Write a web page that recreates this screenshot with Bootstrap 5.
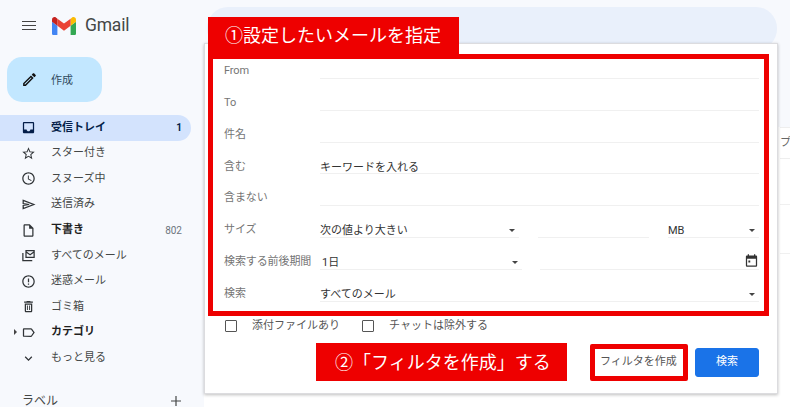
<!DOCTYPE html>
<html lang="ja">
<head>
    <meta charset="UTF-8">
    <meta name="viewport" content="width=device-width, initial-scale=1.0">
    <title>Gmail</title>
    <link href="https://cdn.jsdelivr.net/npm/bootstrap@5.3.0/dist/css/bootstrap.min.css" rel="stylesheet">
    <style>
        html, body {
            height: 407px;
            overflow: hidden;
        }
        body {
            background-color: #f7f9fd;
            font-family: Roboto, "Noto Sans CJK JP", sans-serif;
            font-size: 11px;
            color: #444746;
        }
        svg { display: block; flex-shrink: 0; }
        .gm-shell { height: 407px; width: 790px; overflow: hidden; }
        .gm-side { width: 204px; flex-shrink: 0; height: 407px; overflow: hidden; }
        .gm-top { height: 57px; padding: 0 0 6px 22px; }
        .gm-burger { width: 14px; margin-right: 16px; }
        .gm-burger i { display: block; height: 1.5px; background: #444; margin: 2.5px 0; }
        .gm-word { font-size: 17.5px; color: #444746; margin-left: 9px; letter-spacing: -.2px; }
        .gm-compose {
            width: 95px; height: 45px; margin-left: 7px; padding: 0 0 0 14px; gap: 13px;
            background: #c2e7ff; border-radius: 15px; color: #2f4a5e; margin-bottom: 13px;
        }
        .gm-compose span { padding-top: 3px; }
        .gm-nav { height: 25.6px; padding: 0 9px 0 21px; width: 191px; border-radius: 0 13px 13px 0; }
        .gm-nav svg { width: 15px; height: 15px; fill: #303437; margin-right: 15px; }
        .gm-nav.gm-on { background: #d3e3fd; color: #041e49; font-weight: 700; }
        .gm-nav.gm-on svg { fill: #041e49; }
        .gm-nav.gm-bold { color: #1f1f1f; font-weight: 700; }
        .gm-nav svg.gm-send { fill: none; stroke: #303437; stroke-width: 2; }
        .gm-count { margin-left: auto; font-size: 10px; }
        .gm-caret { position: absolute; left: 14px; top: 9px; border-left: 3px solid #444; border-top: 3px solid transparent; border-bottom: 3px solid transparent; }
        .gm-labels { margin-top: 24px; padding: 0 9px 0 22px; font-size: 12px; line-height: 12px; width: 191px; }
        .gm-main { flex-grow: 1; min-width: 0; padding-top: 7px; }
        .gm-search { width: 570px; height: 43px; margin-left: 3px; background: #e9f0fb; border-radius: 21px; }
        .gm-list { background: #fff; height: 357px; margin-top: 0; color: #666; }
        .gm-tab { margin-top: 77px; margin-left: 576px; height: 32px; padding-top: 7px; border-top: 1px solid #eee; border-bottom: 1px solid #eee; font-size: 11px; white-space: nowrap; }
        .gm-listline { margin-top: 45px; height: 50px; border-top: 1px solid #f0f0f0; border-bottom: 1px solid #f0f0f0; margin-left: 576px; }
        .gm-dialog {
            position: absolute; left: 204px; top: 43px; width: 574px; height: 351px;
            padding: 3px 18px 0 19px; background: #fff; border: 1px solid #dcdcdf; box-shadow: 0 1px 3px rgba(0,0,0,.25);
        }
        .gm-row { height: 31.85px; }
        .gm-name { width: 96px; color: #757575; padding-top: 16px; line-height: 16px; flex-shrink: 0; white-space: nowrap; letter-spacing: -.1px; }
        .gm-val { height: 100%; padding-top: 17px; line-height: 16px; border-bottom: 1px solid #f0f0f0; color: #333; }
        .gm-arrow::after {
            content: ""; position: absolute; right: 4px; top: 23px;
            border-top: 3px solid #444; border-left: 3px solid transparent; border-right: 3px solid transparent;
        }
        .gm-w-a { width: 199px; } .gm-w-b { width: 111px; margin-left: 19px; } .gm-w-c { width: 91px; margin-left: 19px; }
        .gm-w-d { width: 202px; padding-left: 2px; } .gm-w-e { width: 219px; margin-left: 18px; }
        .gm-cal { margin-top: -2px; }
        .gm-checks { margin-top: 16px; padding-left: 1px; color: #555; height: 16px; }
        .gm-checks .form-check-input {
            width: 12px; height: 12px; margin: 0 15px 0 0; border: 1.5px solid #555; border-radius: 1px; float: none;
        }
        .gm-gap { margin-right: 22px; }
        .gm-actions { position: absolute; right: 18px; top: 304px; height: 29px; }
        .gm-plain { font-size: 11px; color: #555; padding: 0 0 0 1px; width: 86px; height: 29px; margin-right: 10px; background: #fff; border: 0; }
        .gm-go { font-size: 11px; width: 64px; height: 29px; padding: 0; background: #1a73e8; border-color: #1a73e8; border-radius: 3px; }
        .gm-note { position: absolute; background: #ee0000; color: #fff; line-height: 1; white-space: nowrap; font-size: 18px; }
        .gm-note-a { left: 208px; top: 17px; width: 251px; height: 37px; padding: 10px 0 0 17px; }
        .gm-note-b { left: 316px; top: 343px; width: 251px; height: 38px; padding: 11px 0 0 19px; }
        .gm-frame { position: absolute; border: 5px solid #ee0000; pointer-events: none; }
        .gm-frame-a { left: 208px; top: 54px; width: 561px; height: 262px; }
        .gm-frame-b { left: 590px; top: 344px; width: 98px; height: 37px; border-radius: 2px; }
    </style>
</head>
<body>

    <div class="gm-shell d-flex">
        <aside class="gm-side">
            <div class="gm-top d-flex align-items-center">
                <div class="gm-burger"><i></i><i></i><i></i></div>
                <svg width="24" height="18" viewBox="0 0 24 18">
                    <path d="M1.6 18h3.8V8.8L0 4.700V16.400C0 17.300.7 18 1.600 18z" fill="#4285f4"/>
                    <path d="M18.600 18h3.800c.9 0 1.600-.7 1.600-1.600V4.700l-5.400 4.100z" fill="#34a853"/>
                    <path d="M18.600 1.700v7.100L24 4.700V2.500c0-2-2.300-3.200-3.900-2z" fill="#fbbc04"/>
                    <path d="M5.400 8.800V1.700L12 6.600l6.600-4.900v7.100L12 13.700z" fill="#ea4335"/>
                    <path d="M0 2.500v2.200l5.400 4.100V1.700L3.900.5C2.300-.7 0 .5 0 2.500z" fill="#c5221f"/>
                </svg>
                <span class="gm-word">Gmail</span>
            </div>
            <div class="gm-compose d-flex align-items-center">
                <svg width="17" height="17" viewBox="0 0 24 24" fill="#111"><path d="M14.060 9.020l.92.92L5.920 19H5v-.92l9.060-9.060M17.660 3c-.25 0-.51.1-.7.29l-1.830 1.830 3.750 3.750 1.830-1.830c.39-.39.39-1.020 0-1.410l-2.340-2.340c-.2-.2-.45-.29-.71-.29zm-3.600 3.190L3 17.250V21h3.750L17.810 9.940l-3.750-3.750z"/></svg>
                <span>作成</span>
            </div>
            <div class="gm-nav gm-on d-flex align-items-center">
                <svg viewBox="0 0 24 24"><path d="M19 3H5c-1.100 0-2 .9-2 2v14c0 1.100.9 2 2 2h14c1.100 0 2-.9 2-2V5c0-1.100-.9-2-2-2zm0 12h-4c0 1.660-1.340 3-3 3s-3-1.340-3-3H5V5h14v10z"/></svg>
                <span>受信トレイ</span><span class="gm-count">1</span>
            </div>
            <div class="gm-nav d-flex align-items-center">
                <svg viewBox="0 0 24 24"><path d="M22 9.240l-7.190-.62L12 2 9.190 8.630 2 9.240l5.460 4.730L5.820 21 12 17.270 18.180 21l-1.630-7.030L22 9.240zM12 15.400l-3.760 2.270 1-4.280-3.320-2.880 4.380-.38L12 6.100l1.710 4.040 4.380.38-3.320 2.880 1 4.280L12 15.400z"/></svg>
                <span>スター付き</span>
            </div>
            <div class="gm-nav d-flex align-items-center">
                <svg viewBox="0 0 24 24"><path d="M11.990 2C6.470 2 2 6.480 2 12s4.470 10 9.990 10C17.520 22 22 17.520 22 12S17.520 2 11.990 2zM12 20c-4.420 0-8-3.580-8-8s3.580-8 8-8 8 3.580 8 8-3.580 8-8 8zm.5-13H11v6l5.250 3.150.75-1.230-4.500-2.670z"/></svg>
                <span>スヌーズ中</span>
            </div>
            <div class="gm-nav d-flex align-items-center">
                <svg class="gm-send" viewBox="0 0 24 24"><path d="M3.500 5.500L20.500 12 3.500 18.500v-5L13 12 3.500 10.500z"/></svg>
                <span>送信済み</span>
            </div>
            <div class="gm-nav gm-bold d-flex align-items-center">
                <svg viewBox="0 0 24 24"><path d="M14 2H6c-1.100 0-2 .9-2 2v16c0 1.100.9 2 2 2h12c1.100 0 2-.9 2-2V8l-6-6zM6 20V4h7v5h5v11H6z"/></svg>
                <span>下書き</span><span class="gm-count fw-normal text-secondary">802</span>
            </div>
            <div class="gm-nav d-flex align-items-center">
                <svg viewBox="0 0 24 24"><path d="M7 3h15v13H7zM9 5v.6l5.500 3.900L20 5.600V5zm11 2.900l-5.500 3.900L9 7.900V14h11zM2 8h2v11h14v2H2z" fill-rule="evenodd"/></svg>
                <span>すべてのメール</span>
            </div>
            <div class="gm-nav d-flex align-items-center">
                <svg viewBox="0 0 24 24"><path d="M11 15h2v2h-2zm0-8h2v6h-2zm.99-5C6.470 2 2 6.480 2 12s4.470 10 9.990 10C17.520 22 22 17.520 22 12S17.520 2 11.990 2zM12 20c-4.420 0-8-3.580-8-8s3.580-8 8-8 8 3.580 8 8-3.580 8-8 8z"/></svg>
                <span>迷惑メール</span>
            </div>
            <div class="gm-nav d-flex align-items-center">
                <svg viewBox="0 0 24 24"><path d="M6 19c0 1.100.9 2 2 2h8c1.100 0 2-.9 2-2V7H6v12zM8 9h8v10H8V9zm1.500 1.500h1.500v7H9.500zm3.500 0h1.500v7H13zM15.500 4l-1-1h-5l-1 1H5v2h14V4z"/></svg>
                <span>ゴミ箱</span>
            </div>
            <div class="gm-nav gm-bold d-flex align-items-center position-relative">
                <span class="gm-caret"></span>
                <svg viewBox="0 0 24 24"><path d="M17.630 5.840C17.270 5.330 16.670 5 16 5L5 5.010C3.900 5.010 3 5.900 3 7v10c0 1.100.9 1.990 2 1.990L16 19c.67 0 1.270-.33 1.630-.84L22 12l-4.370-6.160zM16 17H5V7h11l3.550 5L16 17z"/></svg>
                <span>カテゴリ</span>
            </div>
            <div class="gm-nav d-flex align-items-center">
                <svg viewBox="0 0 24 24"><path d="M16.590 8.590L12 13.170 7.410 8.590 6 10l6 6 6-6z"/></svg>
                <span>もっと見る</span>
            </div>
            <div class="gm-labels d-flex justify-content-between align-items-center">
                <span>ラベル</span>
                <svg width="12" height="12" viewBox="0 0 12 12" fill="#444746"><path d="M5.400 1h1.200v4.400H11v1.200H6.600V11H5.400V6.600H1V5.400h4.400z"/></svg>
            </div>
        </aside>

        <main class="gm-main">
            <div class="gm-search"></div>
            <div class="gm-list">
                <div class="gm-tab">プ</div>
                <div class="gm-listline"></div>
            </div>
        </main>
    </div>

    <div class="gm-dialog">
        <div class="gm-row d-flex"><div class="gm-name">From</div><div class="gm-val flex-grow-1"></div></div>
        <div class="gm-row d-flex"><div class="gm-name">To</div><div class="gm-val flex-grow-1"></div></div>
        <div class="gm-row d-flex"><div class="gm-name">件名</div><div class="gm-val flex-grow-1"></div></div>
        <div class="gm-row d-flex"><div class="gm-name">含む</div><div class="gm-val flex-grow-1">キーワードを入れる</div></div>
        <div class="gm-row d-flex"><div class="gm-name">含まない</div><div class="gm-val flex-grow-1"></div></div>
        <div class="gm-row d-flex">
            <div class="gm-name">サイズ</div>
            <div class="gm-val gm-arrow gm-w-a position-relative">次の値より大きい</div>
            <div class="gm-val gm-w-b"></div>
            <div class="gm-val gm-arrow gm-w-c position-relative">MB</div>
        </div>
        <div class="gm-row d-flex">
            <div class="gm-name">検索する前後期間</div>
            <div class="gm-val gm-arrow gm-w-d position-relative">1日</div>
            <div class="gm-val gm-w-e position-relative d-flex justify-content-end">
                <svg class="gm-cal" width="15" height="15" viewBox="0 0 24 24" fill="#333"><path d="M19 4h-1V2h-2v2H8V2H6v2H5c-1.100 0-2 .9-2 2v14c0 1.100.9 2 2 2h14c1.100 0 2-.9 2-2V6c0-1.100-.9-2-2-2zm0 16H5V9h14v11zM7 12h3v3H7z"/></svg>
            </div>
        </div>
        <div class="gm-row d-flex">
            <div class="gm-name">検索</div>
            <div class="gm-val gm-arrow flex-grow-1 position-relative">すべてのメール</div>
        </div>
        <div class="gm-checks d-flex align-items-center">
            <input class="form-check-input" type="checkbox" id="gmAttach">
            <label for="gmAttach" class="gm-gap">添付ファイルあり</label>
            <input class="form-check-input" type="checkbox" id="gmChat">
            <label for="gmChat">チャットは除外する</label>
        </div>
        <div class="gm-actions d-flex">
            <button type="button" class="btn gm-plain text-start">フィルタを作成</button>
            <button type="button" class="btn btn-primary gm-go">検索</button>
        </div>
    </div>

    <div class="gm-frame gm-frame-a"></div>
    <div class="gm-frame gm-frame-b"></div>
    <div class="gm-note gm-note-a">①設定したいメールを指定</div>
    <div class="gm-note gm-note-b">②「フィルタを作成」する</div>

    <script src="https://cdn.jsdelivr.net/npm/bootstrap@5.3.0/dist/js/bootstrap.bundle.min.js"></script>
</body>
</html>
